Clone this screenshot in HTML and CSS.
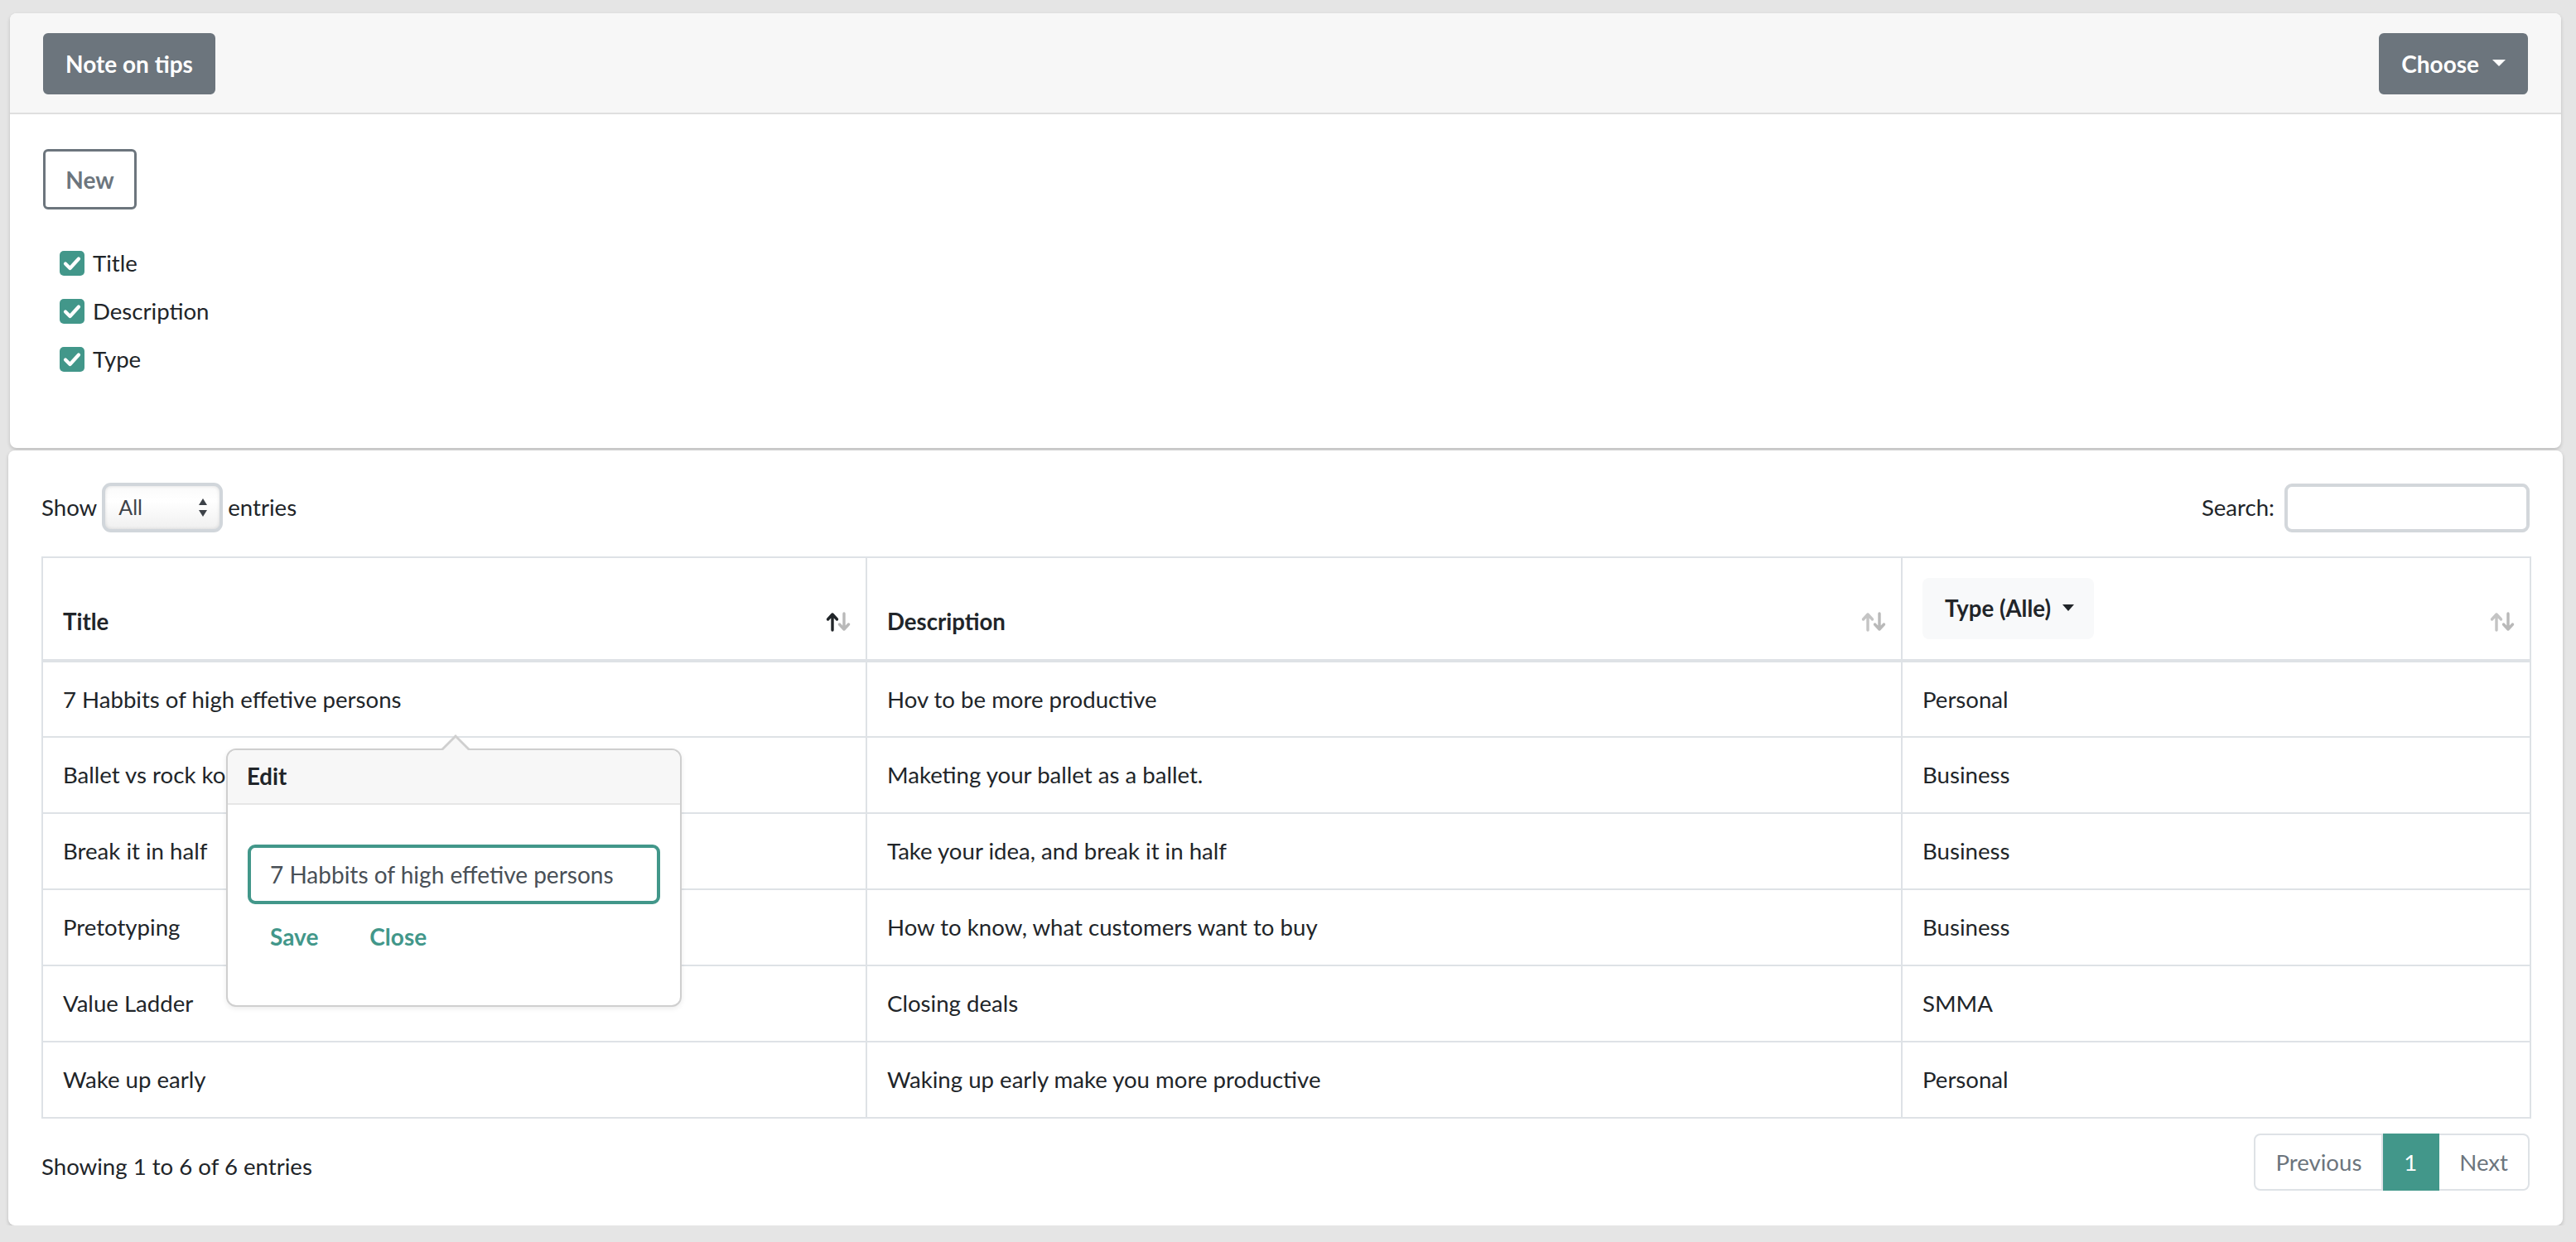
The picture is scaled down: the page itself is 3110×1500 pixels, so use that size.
FILE: index.html
```html
<!DOCTYPE html>
<html lang="en">
<head>
<meta charset="utf-8">
<title>Notes</title>
<link rel="stylesheet" href="styles.css">
</head>
<body>
<div class="page">
  <div class="card top-card">
    <div class="card-header">
      <button class="btn btn-secondary">Note on tips</button>
      <button class="btn btn-secondary">Choose<span class="caret"></span></button>
    </div>
    <div class="card-body">
      <button class="btn btn-outline">New</button>
      <ul class="col-toggles">
        <li><span class="check"><svg viewBox="0 0 30 30" width="30" height="30"><path d="M7 15.5 L12.5 21 L23 9.5" fill="none" stroke="#fff" stroke-width="4.2" stroke-linecap="round" stroke-linejoin="round"/></svg></span>Title</li>
        <li><span class="check"><svg viewBox="0 0 30 30" width="30" height="30"><path d="M7 15.5 L12.5 21 L23 9.5" fill="none" stroke="#fff" stroke-width="4.2" stroke-linecap="round" stroke-linejoin="round"/></svg></span>Description</li>
        <li><span class="check"><svg viewBox="0 0 30 30" width="30" height="30"><path d="M7 15.5 L12.5 21 L23 9.5" fill="none" stroke="#fff" stroke-width="4.2" stroke-linecap="round" stroke-linejoin="round"/></svg></span>Type</li>
      </ul>
    </div>
  </div>

  <div class="card table-card">
    <div class="dt-top">
      <div class="length">Show
        <span class="select"><span>All</span>
          <svg viewBox="0 0 12 26" width="12" height="26"><path d="M6 2 L11 10 L1 10 Z M6 24 L11 16 L1 16 Z" fill="#3d4248"/></svg>
        </span>
        entries</div>
      <div class="search">Search: <input type="text" aria-label="Search"></div>
    </div>

    <div class="table-wrap">
      <table class="data">
        <colgroup>
          <col class="c1"><col class="c2"><col class="c3">
        </colgroup>
        <thead>
          <tr>
            <th><div class="th-inner"><span>Title</span>
              <svg class="sort" viewBox="0 0 32 24" width="32" height="24"><g fill="none" stroke-width="3.4" stroke-linecap="round" stroke-linejoin="round"><path d="M8 22 V3 M2.5 9 L8 3 L13.5 9" stroke="#212529"/><path d="M22 2 V21 M16.5 15 L22 21 L27.5 15" stroke="#b9b9b9"/></g></svg></div></th>
            <th><div class="th-inner"><span>Description</span>
              <svg class="sort" viewBox="0 0 32 24" width="32" height="24"><g fill="none" stroke-width="3.4" stroke-linecap="round" stroke-linejoin="round"><path d="M8 22 V3 M2.5 9 L8 3 L13.5 9" stroke="#c4c4c4"/><path d="M22 2 V21 M16.5 15 L22 21 L27.5 15" stroke="#b9b9b9"/></g></svg></div></th>
            <th><div class="th-inner"><span class="filter-btn">Type (Alle)<span class="caret dark"></span></span>
              <svg class="sort" viewBox="0 0 32 24" width="32" height="24"><g fill="none" stroke-width="3.4" stroke-linecap="round" stroke-linejoin="round"><path d="M8 22 V3 M2.5 9 L8 3 L13.5 9" stroke="#c4c4c4"/><path d="M22 2 V21 M16.5 15 L22 21 L27.5 15" stroke="#b9b9b9"/></g></svg></div></th>
          </tr>
        </thead>
        <tbody>
          <tr><td>7 Habbits of high effetive persons</td><td>Hov to be more productive</td><td>Personal</td></tr>
          <tr><td>Ballet vs rock kong</td><td>Maketing your ballet as a ballet.</td><td>Business</td></tr>
          <tr><td>Break it in half</td><td>Take your idea, and break it in half</td><td>Business</td></tr>
          <tr><td>Pretotyping</td><td>How to know, what customers want to buy</td><td>Business</td></tr>
          <tr><td>Value Ladder</td><td>Closing deals</td><td>SMMA</td></tr>
          <tr><td>Wake up early</td><td>Waking up early make you more productive</td><td>Personal</td></tr>
        </tbody>
      </table>

      <div class="popover">
        <div class="popover-header">Edit</div>
        <div class="popover-body">
          <input class="edit-input" type="text" value="7 Habbits of high effetive persons" aria-label="Title">
          <div class="actions">
            <button class="link-btn">Save</button>
            <button class="link-btn">Close</button>
          </div>
        </div>
      </div>
    </div>

    <div class="dt-bottom">
      <div class="info">Showing 1 to 6 of 6 entries</div>
      <ul class="pagination">
        <li class="page-item">Previous</li>
        <li class="page-item active">1</li>
        <li class="page-item">Next</li>
      </ul>
    </div>
  </div>
</div>
</body>
</html>
```

FILE: styles.css
```css
* { box-sizing: border-box; }

html, body {
  margin: 0;
  padding: 0;
}

body {
  background: #e5e5e5;
  font-family: Lato, "Helvetica Neue", Arial, sans-serif;
  font-size: 27.6px;
  line-height: 1.5;
  color: #212529;
}

.page {
  padding: 16px 16px 0 10px;
}

.card {
  background: #fff;
  border-radius: 8px;
  box-shadow: 0 2px 4px rgba(0, 0, 0, 0.18);
}

.top-card {
  margin: 0 2px 3px;
}

.card-header {
  display: flex;
  justify-content: space-between;
  align-items: center;
  background: #f7f7f7;
  padding: 24px 40px 22px;
  border-bottom: 2px solid #dfdfdf;
  border-radius: 8px 8px 0 0;
}

.btn {
  font-family: Lato, "Helvetica Neue", Arial, sans-serif;
  font-size: 28px;
  line-height: 42px;
  font-weight: 700;
  border-radius: 6px;
  cursor: pointer;
}

.btn-secondary {
  background: #6c757d;
  color: #fff;
  border: 2px solid #6c757d;
  padding: 14px 25px 14px 25px;
  height: 74px;
  display: inline-flex;
  align-items: center;
}

.caret {
  display: inline-block;
  margin-left: 16px;
  width: 0;
  height: 0;
  border-left: 8px solid transparent;
  border-right: 8px solid transparent;
  border-top: 8px solid #fff;
  position: relative;
  top: -1px;
}

.caret.dark {
  border-top-color: #212529;
  margin-left: 14px;
  border-left-width: 7px;
  border-right-width: 7px;
  border-top-width: 8px;
}

.card-body {
  padding: 42px 40px 86px;
}

.btn-outline {
  background: #fff;
  color: #6c757d;
  border: 3px solid #6c757d;
  height: 73px;
  width: 113px;
  padding: 0;
}

.col-toggles {
  list-style: none;
  margin: 44px 0 0;
  padding: 0 0 0 20px;
  display: flex;
  flex-direction: column;
  gap: 16px;
}

.col-toggles li {
  display: flex;
  align-items: center;
  height: 42px;
  gap: 10px;
}

.check {
  width: 30px;
  height: 30px;
  background: #42978a;
  border-radius: 5px;
  display: inline-flex;
}

/* table card */
.table-card {
  padding: 39px 40px 42px;
}

.dt-top {
  display: flex;
  justify-content: space-between;
  align-items: center;
  height: 60px;
}

.length {
  display: flex;
  align-items: center;
  gap: 6px;
}

.select {
  width: 146px;
  height: 60px;
  border: 4px solid #d1d6db;
  border-radius: 11px;
  background: linear-gradient(#fafafa, #ffffff 35%, #f0f0f0);
  box-shadow: inset 0 0 4px rgba(0, 0, 0, 0.12);
  display: flex;
  align-items: center;
  justify-content: space-between;
  padding: 0 14px 0 16px;
  font-size: 25px;
  color: #3d4248;
}

.search {
  display: flex;
  align-items: center;
  gap: 12px;
}

.search input {
  width: 296px;
  height: 59px;
  border: 4px solid #d3d7db;
  border-radius: 9px;
  background: #fff;
  font-size: 28px;
  font-family: inherit;
}

.table-wrap {
  position: relative;
  margin-top: 29px;
}

.data {
  width: 3004px;
  border-collapse: collapse;
  table-layout: fixed;
  border: 2px solid #dee2e6;
}

.c1 { width: 995px; }
.c2 { width: 1250px; }
.c3 { width: 759px; }

.data th,
.data td {
  border: 2px solid #dee2e6;
  padding: 24px 24px;
  text-align: left;
  line-height: 42px;
}

.data th {
  font-weight: 700;
  vertical-align: bottom;
  border-bottom-width: 4px;
  padding-right: 16px;
}

.data td {
  height: 92px;
  padding-top: 23px;
  padding-bottom: 23px;
}

.th-inner {
  display: flex;
  justify-content: space-between;
  align-items: flex-end;
}

.sort {
  flex: none;
  margin-bottom: 9px;
}

.filter-btn {
  display: inline-flex;
  align-items: center;
  height: 74px;
  background: #f8f9fa;
  border-radius: 8px;
  padding: 0 24px 0 27px;
}

/* popover */
.popover {
  position: absolute;
  left: 223px;
  top: 232px;
  width: 550px;
  height: 312px;
  background: #fff;
  border: 2px solid #cfcfcf;
  border-radius: 12px;
  box-shadow: 0 2px 6px rgba(0, 0, 0, 0.08);
}

.popover::before,
.popover::after {
  content: "";
  position: absolute;
  width: 0;
  height: 0;
  border-left: 17px solid transparent;
  border-right: 17px solid transparent;
}

.popover::before {
  left: 258px;
  top: -19px;
  border-bottom: 17px solid #cfcfcf;
}

.popover::after {
  left: 260px;
  top: -15px;
  border-left-width: 15px;
  border-right-width: 15px;
  border-bottom: 15px solid #f7f7f7;
}

.popover-header {
  background: #f7f7f7;
  border-bottom: 2px solid #e6e6e6;
  border-radius: 10px 10px 0 0;
  padding: 11px 23px;
  font-weight: 700;
  line-height: 42px;
}

.popover-body {
  padding: 48px 24px 0;
}

.edit-input {
  display: block;
  width: 498px;
  height: 72px;
  border: 4px solid #42978a;
  border-radius: 9px;
  padding: 0 23px;
  font-family: inherit;
  font-size: 28px;
  color: #495057;
  background: #fff;
  outline: none;
}

.actions {
  display: flex;
  gap: 62px;
  margin-top: 18px;
  padding-left: 27px;
}

.link-btn {
  background: none;
  border: 0;
  padding: 0;
  font-family: inherit;
  font-size: 28px;
  line-height: 42px;
  font-weight: 700;
  color: #42978a;
  cursor: pointer;
}

/* footer */
.dt-bottom {
  display: flex;
  justify-content: space-between;
  align-items: flex-start;
  margin-top: 18px;
}

.info {
  padding-top: 19px;
  line-height: 42px;
}

.pagination {
  list-style: none;
  margin: 0;
  padding: 0;
  display: flex;
}

.page-item {
  height: 69px;
  padding: 0 24px;
  display: flex;
  align-items: center;
  color: #6c757d;
  border: 2px solid #dee2e6;
  border-left-width: 0;
  background: #fff;
}

.page-item:first-child {
  border-left-width: 2px;
  border-radius: 8px 0 0 8px;
}

.page-item:last-child {
  border-radius: 0 8px 8px 0;
}

.page-item.active {
  background: #42978a;
  border-color: #42978a;
  color: #fff;
  width: 68px;
  justify-content: center;
  padding: 0;
}
```
